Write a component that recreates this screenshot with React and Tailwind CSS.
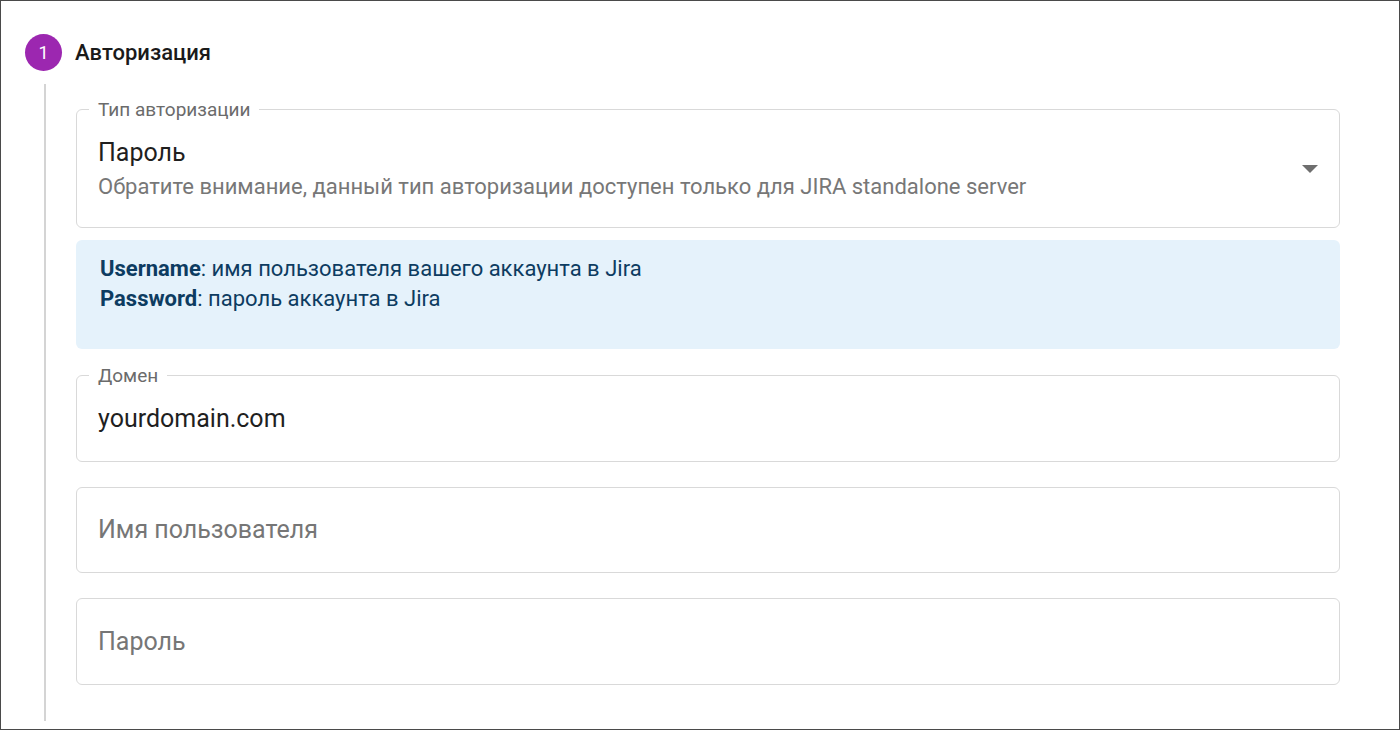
import React from "react";

function Field({ label, children, className = "" }) {
  return (
    <div className={`relative rounded-[6px] border border-[#d9d9d9] ${className}`}>
      {label && (
        <span className="absolute left-[12px] top-[-11px] bg-white px-[9px] text-[19px] leading-[22px] text-[#6b6b6b]">
          {label}
        </span>
      )}
      {children}
    </div>
  );
}

export default function App() {
  return (
    <div
      className="w-[1400px] h-[730px] bg-white border border-[#4a4a4a] overflow-hidden"
      style={{ fontFamily: "Roboto, 'Noto Sans', sans-serif" }}
    >
      <div className="pl-[24px] pt-[33px] pr-[59px]">
        <div className="flex items-center gap-[13px]">
          <div className="w-[37px] h-[37px] rounded-full bg-[#9c27b0] flex items-center justify-center text-white text-[18px]">
            1
          </div>
          <div className="text-[22px] leading-[30px] font-medium text-[#1a1a1a]">Авторизация</div>
        </div>
        <div className="flex mt-[13px]">
          <div className="w-[51px] shrink-0 flex">
            <div className="ml-[19px] w-[2px] bg-[#d4d4d4]" />
          </div>
          <div className="flex-1 pt-[25px] pb-[36px]">
            <Field label="Тип авторизации" className="h-[119px]">
              <div className="pl-[21px] pt-[28px]">
                <div className="text-[25px] leading-[30px] text-[#1f1f1f]">Пароль</div>
                <div className="mt-[6px] text-[22px] leading-[26px] text-[#777777]">
                  Обратите внимание, данный тип авторизации доступен только для JIRA standalone server
                </div>
              </div>
              <svg
                className="absolute right-[20px] top-[54px]"
                width="18"
                height="10"
                viewBox="0 0 18 10"
              >
                <path d="M1 1 L17 1 L9 9 Z" fill="#6e6e6e" />
              </svg>
            </Field>
            <div className="mt-[12px] h-[109px] rounded-[6px] bg-[#e5f2fb] pl-[24px] pt-[14px] text-[22px] leading-[30px] text-[#0d3c61]">
              <div>
                <span className="font-bold">Username</span>: имя пользователя вашего аккаунта в Jira
              </div>
              <div>
                <span className="font-bold">Password</span>: пароль аккаунта в Jira
              </div>
            </div>
            <Field label="Домен" className="mt-[26px] h-[87px] flex items-center pl-[21px]">
              <span className="text-[25px] text-[#1f1f1f]">yourdomain.com</span>
            </Field>
            <Field className="mt-[25px] h-[86px] flex items-center pl-[21px]">
              <span className="text-[25px] text-[#767676]">Имя пользователя</span>
            </Field>
            <Field className="mt-[25px] h-[87px] flex items-center pl-[21px]">
              <span className="text-[25px] text-[#767676]">Пароль</span>
            </Field>
          </div>
        </div>
      </div>
    </div>
  );
}
